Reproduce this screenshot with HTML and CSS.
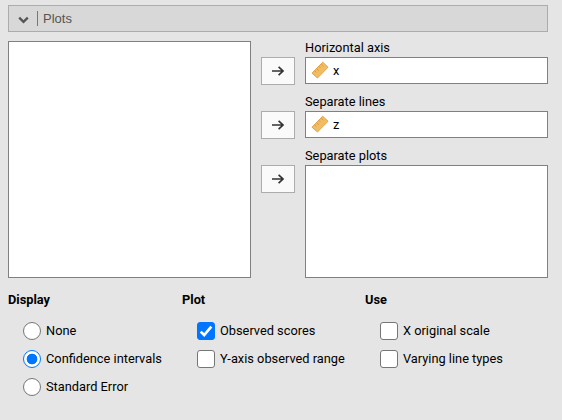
FILE: index.html
```html
<!DOCTYPE html>
<html lang="en">
<head>
<meta charset="utf-8">
<title>Plots</title>
<link rel="stylesheet" href="styles.css">
</head>
<body>
<svg class="defs" width="0" height="0">
  <symbol id="arrow" viewBox="0 0 14 12"><path d="M1 6H12M7.6 1.8 12 6 7.6 10.2" fill="none" stroke="#333" stroke-width="1.7"/></symbol>
  <symbol id="ruler" viewBox="0 0 18 18"><path d="M1 12.2 11.7 1.2 17 6.2 6.5 17Z" fill="#f2bd62" stroke="#e0a347" stroke-width="1" stroke-linejoin="round"/><path d="M3.6 9.7 5.3 11.4M5.7 7.6 7.9 9.8M7.9 5.4 9.5 7M10 3.2 12.2 5.4" stroke="#cf9037" stroke-width=".8"/></symbol>
</svg>
<header class="header">
  <svg class="chevron" width="11" height="8" viewBox="0 0 11 8"><path d="M1.2 1.6 5.5 5.8 9.8 1.6" fill="none" stroke="#555" stroke-width="2.3"/></svg>
  <span class="title">Plots</span>
</header>
<main class="assign">
  <div class="source"></div>
  <div class="targets">
    <section class="target">
      <button class="move"><svg width="14" height="12"><use href="#arrow"/></svg></button>
      <div class="field"><div class="label">Horizontal axis</div><div class="box"><svg class="ruler" width="18" height="18"><use href="#ruler"/></svg><span>x</span></div></div>
    </section>
    <section class="target">
      <button class="move"><svg width="14" height="12"><use href="#arrow"/></svg></button>
      <div class="field"><div class="label">Separate lines</div><div class="box"><svg class="ruler" width="18" height="18"><use href="#ruler"/></svg><span>z</span></div></div>
    </section>
    <section class="target">
      <button class="move"><svg width="14" height="12"><use href="#arrow"/></svg></button>
      <div class="field"><div class="label">Separate plots</div><div class="box tall"></div></div>
    </section>
  </div>
</main>
<div class="options">
  <section>
    <h2>Display</h2>
    <label><input type="radio" name="display"><span>None</span></label>
    <label><input type="radio" name="display" checked><span>Confidence intervals</span></label>
    <label><input type="radio" name="display"><span>Standard Error</span></label>
  </section>
  <section>
    <h2>Plot</h2>
    <label><input type="checkbox" checked><span>Observed scores</span></label>
    <label><input type="checkbox"><span>Y-axis observed range</span></label>
  </section>
  <section>
    <h2>Use</h2>
    <label><input type="checkbox"><span>X original scale</span></label>
    <label><input type="checkbox"><span>Varying line types</span></label>
  </section>
</div>
</body>
</html>
```
FILE: styles.css
```css
* { box-sizing: border-box; }
body {
  margin: 0;
  padding: 5px 14px 0 8px;
  height: 420px;
  overflow: hidden;
  background: #e5e5e5;
  color: #000;
  font: 12.8px/16px Roboto, sans-serif;
}
.defs { position: absolute; }
.header {
  display: flex;
  align-items: center;
  height: 27px;
  padding-left: 9px;
  border: 1px solid #acacac;
  background: #d8d8d8;
  color: #555;
  font: 13px/15px "Liberation Sans", Arial, sans-serif;
}
.chevron { margin-top: 3px; }
.title { margin-left: 8px; padding-left: 5px; border-left: 1px solid #777; }
.assign { display: flex; gap: 10px; height: 237px; margin-top: 9px; }
.source { width: 243px; border: 1px solid #808080; background: #fff; }
.targets { display: flex; flex-direction: column; gap: 11px; }
.target { display: flex; gap: 10px; height: 43px; }
.move {
  display: flex;
  align-items: center;
  justify-content: center;
  width: 34px;
  height: 28px;
  margin: 16px 0 0;
  padding: 0;
  border: 1px solid #acacac;
  background: #fafafa;
}
.label { height: 16px; line-height: 14px; }
.box {
  display: flex;
  align-items: center;
  gap: 4px;
  width: 243px;
  height: 27px;
  padding-left: 5px;
  border: 1px solid #808080;
  background: #fff;
}
.box.tall { height: 113px; }
.ruler { margin-bottom: 1px; }
.options {
  display: grid;
  grid-template-columns: 174px 183px 1fr;
  margin-top: 14px;
}
h2 { margin: 0 0 14px; font-size: 12.8px; line-height: 16px; font-weight: 700; }
label { display: flex; align-items: center; gap: 5px; height: 18px; margin: 0 0 10px 15px; white-space: nowrap; }
input {
  appearance: none;
  flex: none;
  width: 18px;
  height: 18px;
  margin: 0;
  border: 1px solid #767676;
  background: #fff;
}
input[type="radio"] { border-radius: 50%; }
input[type="radio"]:checked { border-color: #0075ff; background: radial-gradient(circle, #0075ff 5px, #fff 5.7px); }
input[type="checkbox"] { border-radius: 3px; }
input[type="checkbox"]:checked {
  border-color: #0075ff;
  background: #0075ff url("data:image/svg+xml,%3Csvg xmlns='http://www.w3.org/2000/svg' viewBox='0 0 16 16'%3E%3Cpath d='M2.7 8.6 6.2 12 13.3 3.6' fill='none' stroke='white' stroke-width='2.7'/%3E%3C/svg%3E") center / 16px 16px no-repeat;
}
```
